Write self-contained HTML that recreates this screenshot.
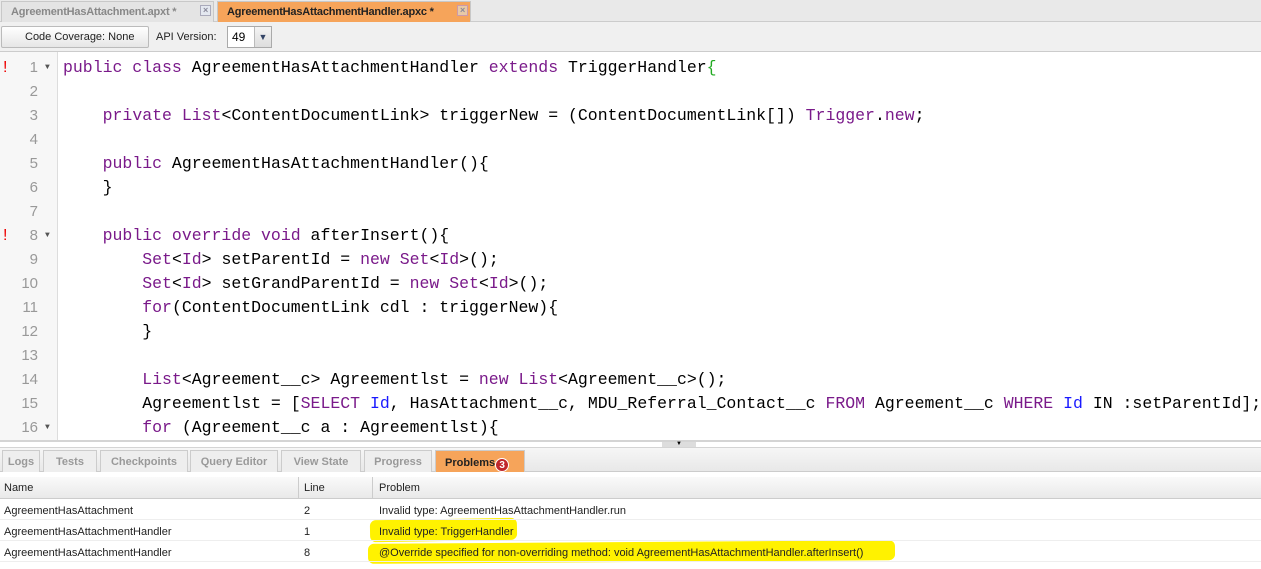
<!DOCTYPE html>
<html><head><meta charset="utf-8"><style>
*{margin:0;padding:0;box-sizing:border-box}
body{width:1261px;height:569px;overflow:hidden;background:#fff;font-family:"Liberation Sans",Arial,sans-serif;position:relative}
.tabbar{position:absolute;left:0;top:0;width:1261px;height:22px;background:#e9e9e9;border-bottom:1px solid #ccc}
.ftab{position:absolute;top:1px;height:21px;font-size:11px;font-weight:bold;line-height:20px;padding-left:9px;border:1px solid #c8c8c8;border-bottom:none;white-space:nowrap;letter-spacing:-0.2px}
.x{position:absolute;top:3px;width:11px;height:11px;border:1px solid #aab;background:#e4e8f0;font-size:9px;line-height:9px;text-align:center;color:#889;font-weight:bold}
.toolbar{position:absolute;left:0;top:22px;width:1261px;height:30px;background:#f0f0f0;border-bottom:1px solid #ccc}
.btn{position:absolute;left:1px;top:4px;width:148px;height:22px;border:1px solid #bbb;border-radius:2px;background:linear-gradient(#fff,#e6e6e6);font-size:11px;line-height:20px;padding-left:23px;color:#222}
.gutter{position:absolute;left:0;top:52px;width:58px;height:388px;background:#f7f7f7;border-right:1px solid #ddd}
.code{position:absolute;left:0;top:52px;width:1261px;height:388px;overflow:hidden}
.ln{position:absolute;left:0;width:1261px;height:24px;font-family:"Liberation Mono",monospace;font-size:16.5px;line-height:24px;white-space:pre;color:#000}
.num{position:absolute;left:0;width:38px;text-align:right;color:#999;font-family:"Liberation Sans",sans-serif;font-size:15px}
.arr{position:absolute;left:45px;font-size:8px;color:#555}
.bang{position:absolute;left:3px;color:#e00;font-family:"Liberation Sans",sans-serif;font-size:16px}
.t{position:absolute;left:63px}
.k{color:#7a1a8a}.b{color:#1a1aff}.g{color:#2a2}
.split{position:absolute;left:0;top:440px;width:1261px;height:8px;background:#fff;border-top:2px solid #d4d4d4;border-bottom:1px solid #d4d4d4}
.btabs{position:absolute;left:0;top:448px;width:1261px;height:24px;background:linear-gradient(#f6f6f6,#e8e8e8);border-bottom:1px solid #ccc}
.bt{position:absolute;top:2px;height:22px;border:1px solid #ccc;border-bottom:none;background:#eee;font-size:11px;font-weight:bold;color:#999;text-align:center;line-height:22px}
.hdr{position:absolute;left:0;top:477px;width:1261px;height:22px;background:linear-gradient(#fafafa,#e9e9e9);border-bottom:1px solid #ccc;font-size:11px;line-height:22px;color:#222}
.row{position:absolute;left:0;width:1261px;height:21px;font-size:11px;line-height:24px;color:#222;border-bottom:1px solid #eee}
.c1{position:absolute;left:4px}.c2{position:absolute;left:304px}.c3{position:absolute;left:379px}
.hl{position:absolute;background:#fff200;border-radius:6px}
</style></head><body>
<div class="tabbar">
<div class="ftab" style="left:1px;width:213px;background:#e4e4e4;color:#888">AgreementHasAttachment.apxt *<span class="x" style="left:198px">×</span></div>
<div class="ftab" style="left:217px;width:254px;background:#f6a45a;color:#222">AgreementHasAttachmentHandler.apxc *<span class="x" style="left:239px;background:#e8c9a6;border-color:#c9a">×</span></div>
</div>
<div class="toolbar">
<div class="btn">Code Coverage: None <span style="font-size:8px;margin-left:4px">▼</span></div>
<div style="position:absolute;left:156px;top:4px;font-size:11px;line-height:22px;color:#222">API Version:</div>
<div style="position:absolute;left:227px;top:4px;width:45px;height:22px;border:1px solid #aaa;background:#fff;font-size:12px;line-height:20px;padding-left:4px">49<div style="position:absolute;right:0;top:0;width:17px;height:20px;background:linear-gradient(#f4f4f4,#ddd);border-left:1px solid #bbb;font-size:9px;color:#346;text-align:center">▼</div></div>
</div>
<div class="gutter"></div>
<div class="code">
<div class="ln" style="top:4px"><span class="bang">!</span><span class="num">1</span><span class="arr">▼</span><span class="t"><span class="k">public class</span> AgreementHasAttachmentHandler <span class="k">extends</span> TriggerHandler<span class="g">{</span></span></div>
<div class="ln" style="top:28px"><span class="num">2</span></div>
<div class="ln" style="top:52px"><span class="num">3</span><span class="t">    <span class="k">private</span> <span class="k">List</span>&lt;ContentDocumentLink&gt; triggerNew = (ContentDocumentLink[]) <span class="k">Trigger</span>.<span class="k">new</span>;</span></div>
<div class="ln" style="top:76px"><span class="num">4</span></div>
<div class="ln" style="top:100px"><span class="num">5</span><span class="t">    <span class="k">public</span> AgreementHasAttachmentHandler(){</span></div>
<div class="ln" style="top:124px"><span class="num">6</span><span class="t">    }</span></div>
<div class="ln" style="top:148px"><span class="num">7</span></div>
<div class="ln" style="top:172px"><span class="bang">!</span><span class="num">8</span><span class="arr">▼</span><span class="t">    <span class="k">public override void</span> afterInsert(){</span></div>
<div class="ln" style="top:196px"><span class="num">9</span><span class="t">        <span class="k">Set</span>&lt;<span class="k">Id</span>&gt; setParentId = <span class="k">new</span> <span class="k">Set</span>&lt;<span class="k">Id</span>&gt;();</span></div>
<div class="ln" style="top:220px"><span class="num">10</span><span class="t">        <span class="k">Set</span>&lt;<span class="k">Id</span>&gt; setGrandParentId = <span class="k">new</span> <span class="k">Set</span>&lt;<span class="k">Id</span>&gt;();</span></div>
<div class="ln" style="top:244px"><span class="num">11</span><span class="t">        <span class="k">for</span>(ContentDocumentLink cdl : triggerNew){</span></div>
<div class="ln" style="top:268px"><span class="num">12</span><span class="t">        }</span></div>
<div class="ln" style="top:292px"><span class="num">13</span></div>
<div class="ln" style="top:316px"><span class="num">14</span><span class="t">        <span class="k">List</span>&lt;Agreement__c&gt; Agreementlst = <span class="k">new</span> <span class="k">List</span>&lt;Agreement__c&gt;();</span></div>
<div class="ln" style="top:340px"><span class="num">15</span><span class="t">        Agreementlst = [<span class="k">SELECT</span> <span class="b">Id</span>, HasAttachment__c, MDU_Referral_Contact__c <span class="k">FROM</span> Agreement__c <span class="k">WHERE</span> <span class="b">Id</span> IN :setParentId];</span></div>
<div class="ln" style="top:364px"><span class="num">16</span><span class="arr">▼</span><span class="t">        <span class="k">for</span> (Agreement__c a : Agreementlst){</span></div>
</div>
<div class="split"><div style="position:absolute;left:662px;top:0;width:34px;height:5px;background:#ddd;font-size:6px;text-align:center;line-height:5px">▼</div></div>
<div class="btabs">
<div class="bt" style="left:2px;width:38px">Logs</div>
<div class="bt" style="left:43px;width:54px">Tests</div>
<div class="bt" style="left:100px;width:88px">Checkpoints</div>
<div class="bt" style="left:190px;width:88px">Query Editor</div>
<div class="bt" style="left:281px;width:80px">View State</div>
<div class="bt" style="left:364px;width:68px">Progress</div>
<div class="bt" style="left:435px;width:90px;background:#f6a45a;color:#222;text-align:left;padding-left:9px;line-height:24px">Problems<span style="display:inline-block;width:14px;height:14px;border-radius:7px;background:#c0262a;color:#fff;font-size:10px;line-height:14px;text-align:center;vertical-align:-2px;border:1px solid #fff">3</span></div>
</div>
<div class="hdr"><span class="c1">Name</span><span style="position:absolute;left:298px;top:0;height:22px;border-left:1px solid #ccc"></span><span class="c2">Line</span><span style="position:absolute;left:372px;top:0;height:22px;border-left:1px solid #ccc"></span><span class="c3">Problem</span></div>
<div class="hl" style="left:370px;top:519px;width:147px;height:22px;transform:rotate(-1deg)"></div>
<div class="hl" style="left:368px;top:542px;width:527px;height:20px;transform:rotate(-0.4deg)"></div>
<div class="row" style="top:499px"><span class="c1">AgreementHasAttachment</span><span class="c2">2</span><span class="c3">Invalid type: AgreementHasAttachmentHandler.run</span></div>
<div class="row" style="top:520px"><span class="c1">AgreementHasAttachmentHandler</span><span class="c2">1</span><span class="c3">Invalid type: TriggerHandler</span></div>
<div class="row" style="top:541px"><span class="c1">AgreementHasAttachmentHandler</span><span class="c2">8</span><span class="c3">@Override specified for non-overriding method: void AgreementHasAttachmentHandler.afterInsert()</span></div>
</body></html>
